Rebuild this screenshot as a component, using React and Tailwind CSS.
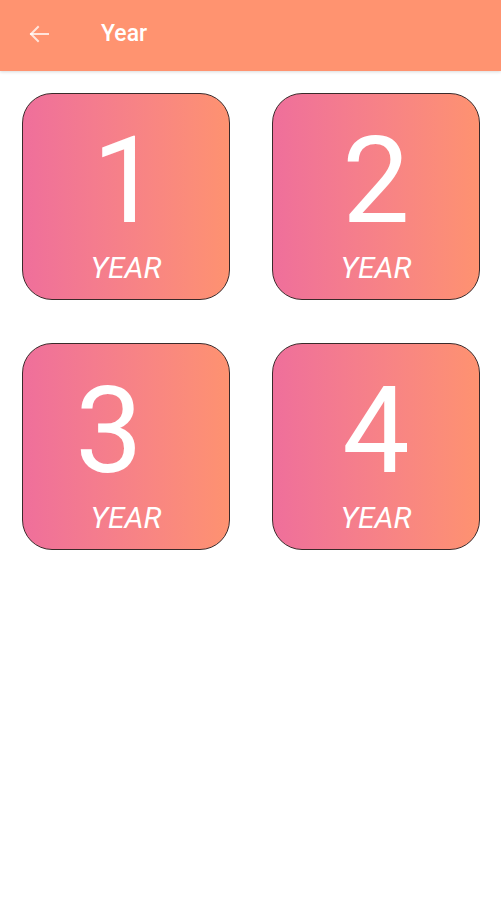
import React from "react";

function Card({ n, shift }) {
  return (
    <div className="h-[207px] rounded-[30px] border border-[#3a2a2a] bg-gradient-to-r from-[#ef6f9b] to-[#fe9270] flex flex-col items-center text-white">
      <div className={"mt-[27px] text-[120px] leading-[120px] font-normal " + (shift ? "mr-[34px]" : "")}>{n}</div>
      <div className="mt-[12px] text-[30px] leading-[30px] italic">YEAR</div>
    </div>
  );
}

export default function App() {
  return (
    <div className="w-[501px] h-[900px] bg-white" style={{ fontFamily: "Roboto, 'Noto Sans', sans-serif" }}>
      <div className="h-[71px] bg-[#ff9370] flex items-center pb-[3px] shadow-[0_1px_3px_rgba(0,0,0,0.15)]">
        <svg className="ml-[27px]" width="24" height="24" viewBox="0 0 24 24" fill="none" stroke="rgba(255,255,255,0.75)" strokeWidth="2" strokeLinecap="square">
          <path d="M21 12H4" />
          <path d="M11 5l-7 7 7 7" />
        </svg>
        <span className="ml-[50px] text-white text-[23px] font-medium">Year</span>
      </div>
      <div className="grid grid-cols-2 gap-x-[42px] gap-y-[43px] pl-[22px] pr-[21px] pt-[22px]">
        <Card n="1" />
        <Card n="2" />
        <Card n="3" shift />
        <Card n="4" />
      </div>
    </div>
  );
}
